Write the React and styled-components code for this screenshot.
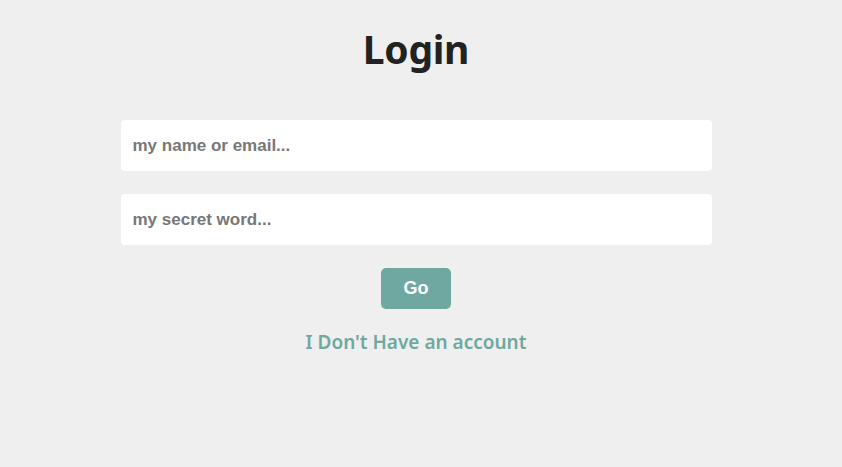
import React from "react";
import styled, { createGlobalStyle } from "styled-components";

const Global = createGlobalStyle`
  html, body { margin: 0; padding: 0; background: #efefef; }
  body { font-family: "Liberation Sans", Arial, sans-serif; }
`;

const Page = styled.main`
  width: 832px;
  display: flex;
  flex-direction: column;
  align-items: center;
  padding-top: 23px;
`;

const Title = styled.h1`
  margin: 0;
  font-family: "Noto Sans", "Open Sans", sans-serif;
  font-weight: 700;
  font-size: 39px;
  line-height: 51px;
  color: #222;
  letter-spacing: -0.3px;
`;

const Form = styled.form`
  width: 591px;
  margin-top: 46px;
  display: flex;
  flex-direction: column;
  align-items: center;
  gap: 23px;
`;

const Input = styled.input`
  box-sizing: border-box;
  width: 100%;
  height: 51px;
  border: none;
  border-radius: 4px;
  background: #fff;
  padding: 0 12px;
  font-family: "Liberation Sans", Arial, sans-serif;
  font-weight: 700;
  font-size: 17px;
  color: #333;
  outline: none;
  &::placeholder { color: #777; opacity: 1; }
`;

const Button = styled.button`
  width: 70px;
  height: 41px;
  border: none;
  border-radius: 5px;
  background: #6fa8a0;
  color: #fff;
  font-family: "Liberation Sans", Arial, sans-serif;
  font-weight: 700;
  font-size: 18px;
  cursor: pointer;
`;

const Link = styled.a`
  margin-top: 20px;
  font-family: "Noto Sans", "Open Sans", sans-serif;
  font-weight: 600;
  font-size: 19px;
  line-height: 26px;
  color: #6fa8a0;
  text-decoration: none;
  cursor: pointer;
`;

export default function App() {
  return (
    <>
      <Global />
      <Page>
        <Title>Login</Title>
        <Form onSubmit={(e) => e.preventDefault()}>
          <Input placeholder="my name or email..." />
          <Input type="password" placeholder="my secret word..." />
          <Button type="submit">Go</Button>
        </Form>
        <Link>I Don't Have an account</Link>
      </Page>
    </>
  );
}
